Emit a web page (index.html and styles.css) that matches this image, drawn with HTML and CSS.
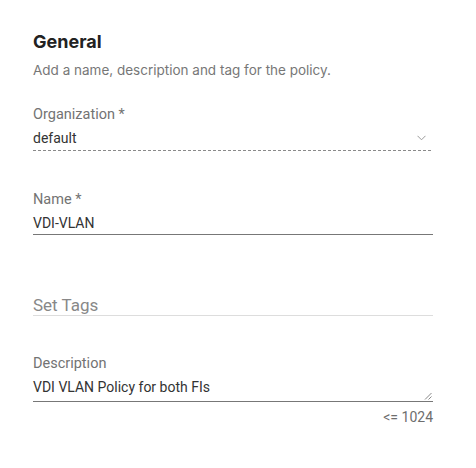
FILE: index.html
```html
<!DOCTYPE html>
<html>
  <head>
    <link rel="stylesheet" href="styles.css">
  </head>
  <body>
    <div class="panel">
      <h2 class="title">General</h2>
      <p class="subtitle">Add a name, description and tag for the policy.</p>

      <div class="field org">
        <div class="label">Organization *</div>
        <div class="control dashed">
          <span class="value">default</span>
          <svg class="chevron" width="9" height="6" viewBox="0 0 9 6">
            <path d="M0.5 0.8 L4.5 4.8 L8.5 0.8" fill="none" stroke="#9a9a9a" stroke-width="1"/>
          </svg>
        </div>
      </div>

      <div class="field name">
        <div class="label">Name *</div>
        <div class="control solid">
          <span class="value">VDI-VLAN</span>
        </div>
      </div>

      <div class="field tags">
        <div class="control light">
          <span class="placeholder">Set Tags</span>
        </div>
      </div>

      <div class="field desc">
        <div class="label">Description</div>
        <div class="control solid area">
          <span class="value">VDI VLAN Policy for both FIs</span>
          <svg class="grip" width="8" height="8" viewBox="0 0 8 8">
            <path d="M7.5 1 L1 7.5 M7.5 4.5 L4.5 7.5" fill="none" stroke="#888" stroke-width="1"/>
          </svg>
        </div>
        <div class="counter">&lt;= 1024</div>
      </div>
    </div>
  </body>
</html>
```

FILE: styles.css
```css
body {
  margin: 0;
  background-color: #ffffff;
  font-family: Roboto, "Liberation Sans", sans-serif;
}

.panel {
  width: 400px;
  padding: 32px 0 0 33px;
}

.title {
  margin: 0;
  font-family: Inter, sans-serif;
  font-size: 18px;
  font-weight: 700;
  line-height: 20px;
  color: #222222;
}

.subtitle {
  margin: 10px 0 0 0;
  font-family: Inter, sans-serif;
  font-size: 13.5px;
  line-height: 17px;
  color: #777777;
}

.label {
  font-size: 14.5px;
  line-height: 16px;
  color: #737373;
  margin-bottom: 7px;
}

.control {
  display: flex;
  align-items: center;
  justify-content: space-between;
  font-size: 14px;
  line-height: 16px;
  color: #333333;
}

.value {
  display: block;
}

/* dashed underline with short dashes */
.dashed {
  padding-bottom: 5px;
  background-image: repeating-linear-gradient(to right, #8a8a8a 0, #8a8a8a 3px, transparent 3px, transparent 5px);
  background-size: 100% 1px;
  background-position: left bottom;
  background-repeat: no-repeat;
}

.solid {
  border-bottom: 1px solid #777777;
  padding-bottom: 3px;
}

.light {
  border-bottom: 1px solid #dddddd;
}

.chevron {
  margin-right: 7px;
}

.field.org {
  margin-top: 28px;
}

.field.name {
  margin-top: 41px;
}

.field.tags {
  margin-top: 60px;
}

.placeholder {
  font-size: 17px;
  line-height: 20px;
  color: #888888;
}

.field.desc {
  margin-top: 40px;
}

.area {
  position: relative;
  padding-bottom: 6px;
}

.grip {
  position: absolute;
  right: 1px;
  bottom: 1px;
}

.counter {
  margin-top: 7px;
  text-align: right;
  font-size: 14px;
  line-height: 16px;
  color: #6e6e6e;
}
```
